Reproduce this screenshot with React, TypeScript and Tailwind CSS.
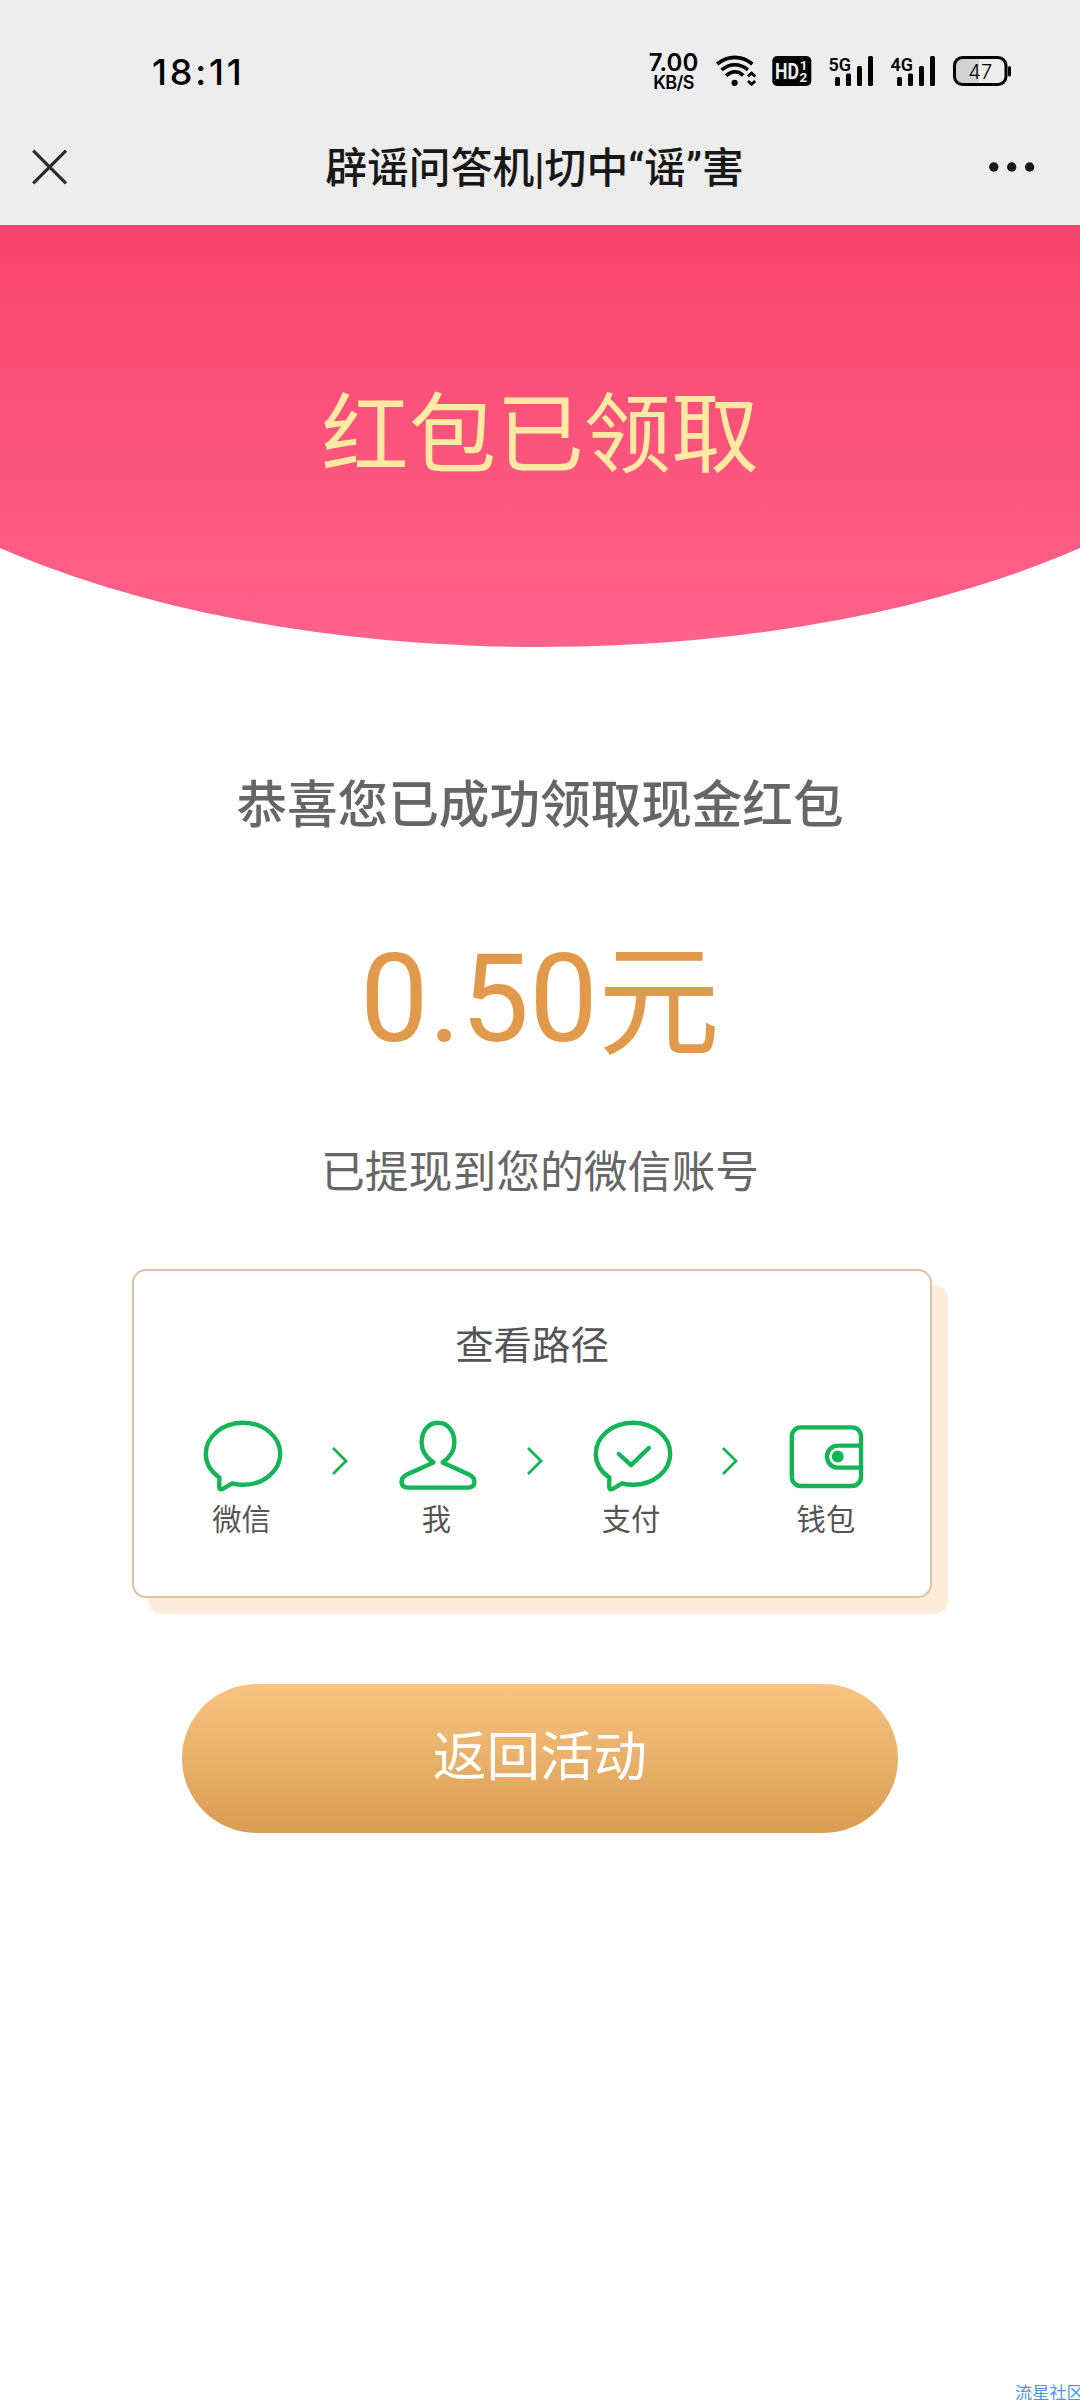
import type { ReactNode } from 'react';

const GREEN = '#14b457';

function WifiIcon() {
  return (
    <svg width="40" height="32" viewBox="0 0 40 32" fill="none" stroke="#000" strokeWidth="3.6">
      <path d="M1.2 9C12 0.2 25.6 0.2 36.4 9" />
      <path d="M5.6 15C13.4 8 24.2 8 31.8 14.8" />
      <path d="M10.2 20.8C15.6 15.4 22.2 15.4 27.2 20.6" />
      <circle cx="18.6" cy="27.8" r="3.1" fill="#000" stroke="none" />
      <path d="M32 21.4L35.6 18.2L39.2 21.4" strokeWidth="2.8" />
      <path d="M32 26L35.6 29.2L39.2 26" strokeWidth="2.8" />
    </svg>
  );
}

function HdIcon() {
  return (
    <svg width="40" height="32" viewBox="0 0 40 32">
      <rect x="0.3" y="1" width="39" height="30" rx="5" fill="#000" />
      <g fill="#ededed" fontFamily="Roboto, sans-serif" fontWeight="700">
        <text x="3" y="24" fontSize="22.5" textLength="24" lengthAdjust="spacingAndGlyphs">HD</text>
        <text x="27.8" y="14.8" fontSize="13.5">1</text>
        <text x="27.6" y="26.6" fontSize="13.5">2</text>
      </g>
    </svg>
  );
}

function SignalIcon({ label }: { label: string }) {
  return (
    <svg width="46" height="32" viewBox="0 0 46 32" className="overflow-visible">
      <text
        x="-0.6"
        y="15.6"
        fontSize="18.8"
        fontWeight="600"
        fontFamily="Roboto, sans-serif"
        textLength="22.5"
        lengthAdjust="spacingAndGlyphs"
      >
        {label}
      </text>
      <rect x="6" y="22" width="5" height="9" rx="1.5" />
      <rect x="17" y="18.6" width="5" height="12.4" rx="1.5" />
      <rect x="28" y="11" width="5" height="20" rx="1.5" />
      <rect x="39" y="1" width="5" height="30" rx="1.5" />
    </svg>
  );
}

function BatteryIcon({ level }: { level: number }) {
  return (
    <svg width="60" height="32" viewBox="0 0 60 32">
      <path d="M9 3H26V29H9C5 29 2 26 2 22V10C2 6 5 3 9 3Z" fill="#d2d2d2" />
      <rect x="1.5" y="2.5" width="51.5" height="27" rx="8" fill="none" stroke="#000" strokeWidth="3" />
      <rect x="55" y="11" width="3" height="10.5" rx="1.5" />
      <text x="27.2" y="23.6" fontSize="20" textAnchor="middle" fontFamily="Inter, sans-serif" fontWeight="300">
        {level}
      </text>
    </svg>
  );
}

function StatusBar() {
  return (
    <div className="flex h-[111px] items-start pl-[152px] font-['Inter',sans-serif] text-black">
      <div className="mt-[50px] w-[498px] text-[36px] leading-[44px] font-medium tracking-[2.8px]">18:11</div>
      <div className="mt-[50px] flex w-[47px] flex-col items-center whitespace-nowrap">
        <div className="text-[24px] leading-[26px] font-semibold">7.00</div>
        <div className="text-[18px] leading-[14px] font-semibold -tracking-[0.6px]">KB/S</div>
      </div>
      <div className="mt-[55px] ml-[19px] flex">
        <WifiIcon />
        <div className="ml-4">
          <HdIcon />
        </div>
        <div className="ml-[17px]">
          <SignalIcon label="5G" />
        </div>
        <div className="ml-4">
          <SignalIcon label="4G" />
        </div>
        <div className="ml-4">
          <BatteryIcon level={47} />
        </div>
      </div>
    </div>
  );
}

function NavBar() {
  return (
    <div className="flex h-[114px] items-center justify-between px-8 pb-[3px]">
      <svg width="80" height="36" viewBox="0 0 80 36" stroke="#2b2b2b" strokeWidth="3.2" fill="none">
        <path d="M1.2 1.6L34 34.4M34 1.6L1.2 34.4" />
      </svg>
      <h1 className="pt-1 pr-[11px] text-[41.8px] leading-[60px] font-medium text-[#181818]">辟谣问答机|切中“谣”害</h1>
      <svg width="80" height="12" viewBox="0 0 80 12" fill="#181818">
        <circle cx="25.8" cy="6" r="4.7" />
        <circle cx="43.7" cy="6" r="4.7" />
        <circle cx="61.6" cy="6" r="4.7" />
      </svg>
    </div>
  );
}

function BubbleIcon({ checked = false }: { checked?: boolean }) {
  return (
    <svg width="80" height="72" viewBox="0 0 80 72" fill="none" stroke={GREEN} strokeWidth="4.4" strokeLinecap="round" strokeLinejoin="round">
      <path d="M16.4 57.5C7.5 51.5 2.8 43 2.8 33.8C2.8 16.7 19.4 2.8 40 2.8C60.6 2.8 77.2 16.7 77.2 33.8C77.2 50.9 60.6 64.8 40 64.8C36 64.8 32.5 64.3 29.2 63.3L20.2 68.7C18 70 16.2 69.3 16.2 67.2Z" />
      {checked && <path d="M25.8 34L38 45.2L55.8 28" />}
    </svg>
  );
}

// the neck stays open between the head and the shoulders
function PersonIcon() {
  return (
    <svg width="80" height="72" viewBox="0 0 80 72" fill="none" stroke={GREEN} strokeWidth="4.4" strokeLinecap="round" strokeLinejoin="round">
      <path d="M35.4 42.4C27.8 37.2 23.6 31 23.6 22.4C23.6 11 30.4 2.8 40 2.8C49.6 2.8 56.4 11 56.4 22.4C56.4 31 52.2 37.2 44.6 42.4L71 54.6C78.8 58.4 77.8 67.6 70.4 67.6H9.6C2.2 67.6 1.2 58.4 9 54.6Z" />
    </svg>
  );
}

function WalletIcon() {
  return (
    <svg width="80" height="72" viewBox="0 0 80 72" fill="none" stroke={GREEN} strokeWidth="4.4">
      <rect x="4.8" y="7.4" width="69.2" height="58.6" rx="9" />
      <path d="M74 25.6H51C44.4 25.6 40 30.6 40 36.6C40 42.6 44.4 47.6 51 47.6H74" />
      <circle cx="50.8" cy="36.6" r="6" fill={GREEN} stroke="none" />
    </svg>
  );
}

function Chevron() {
  return (
    <svg width="18" height="30" viewBox="0 0 18 30" fill="none" stroke={GREEN} strokeWidth="2.8" className="mt-[26px]">
      <path d="M2 2L15 15L2 28" />
    </svg>
  );
}

function Step({ icon, label }: { icon: ReactNode; label: string }) {
  return (
    <div className="flex w-20 flex-col items-center">
      {icon}
      <span className="mt-2 mr-[3px] text-[29.3px] leading-10 whitespace-nowrap text-[#555]">{label}</span>
    </div>
  );
}

const steps = [
  { label: '微信', icon: <BubbleIcon /> },
  { label: '我', icon: <PersonIcon /> },
  { label: '支付', icon: <BubbleIcon checked /> },
  { label: '钱包', icon: <WalletIcon /> },
];

export default function App() {
  return (
    <div className="relative flex h-[2400px] w-[1080px] flex-col overflow-hidden bg-white font-['Roboto','Noto_Sans_CJK_SC',sans-serif]">
      <header className="h-[225px] shrink-0 bg-[#ededed]">
        <StatusBar />
        <NavBar />
      </header>

      <div className="flex h-[422px] w-[1558px] shrink-0 justify-center self-center rounded-[0_0_50%_50%/0_0_84%_84%] bg-linear-to-b from-[#f7436d] to-[#ff628b]">
        <h2 className="mt-[146px] text-[87.5px] leading-[130px] text-[#ffe9a3]">红包已领取</h2>
      </div>

      <main className="flex flex-col items-center">
        <p className="mt-[123px] text-[50.6px] leading-[72px] font-medium text-[#666]">恭喜您已成功领取现金红包</p>
        <p className="mt-[68px] text-[122px] leading-[180px] text-[#e19a4b]">
          0.50<span className="inline-block translate-y-1">元</span>
        </p>
        <p className="mt-[53px] text-[43.8px] leading-[60px] text-[#666]">已提现到您的微信账号</p>

        <section className="mt-[66px] mr-4 h-[329px] w-[800px] rounded-[14px] border-2 border-[#dcc3a5] bg-white shadow-[16px_16px_0_0_#fdecd9]">
          <h3 className="mt-[47px] text-center text-[38.4px] leading-[56px] text-[#555]">查看路径</h3>
          <div className="mt-[46px] flex pl-[69px]">
            {steps.map((step, i) => (
              <div key={step.label} className="flex">
                {i > 0 && (
                  <div className="flex w-[114.8px] justify-center">
                    <Chevron />
                  </div>
                )}
                <Step icon={step.icon} label={step.label} />
              </div>
            ))}
          </div>
        </section>

        <button className="mt-[86px] h-[149px] w-[716px] rounded-full bg-linear-to-b from-[#f8c481] to-[#d99d52] text-[53.6px] text-white">
          返回活动
        </button>
      </main>

      <div className="absolute top-[2383px] left-[1015px] text-[17.2px] leading-5 whitespace-nowrap text-[#4b98e2]">流星社区</div>
    </div>
  );
}
